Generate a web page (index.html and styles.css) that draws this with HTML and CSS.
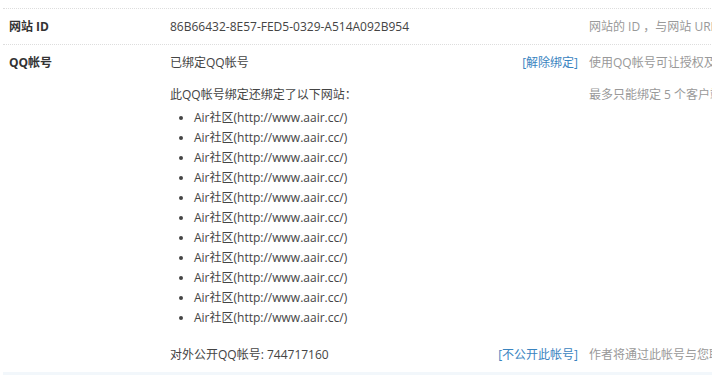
FILE: index.html
```html
<!DOCTYPE html>
<html lang="zh-CN">
<head>
    <meta charset="UTF-8">
    <meta name="viewport" content="width=device-width, initial-scale=1.0">
    <title>站点信息</title>
    <link rel="stylesheet" href="styles.css">
</head>
<body>

<div class="setting">
    <div class="row">
        <div class="row-label">网站 ID</div>
        <div class="row-value">86B66432-8E57-FED5-0329-A514A092B954</div>
        <div class="row-tip">网站的 ID ，与网站 URL 一起作为网站的唯一标识</div>
    </div>

    <div class="row row-qq">
        <div class="row-label qq-label">QQ帐号</div>

        <div class="row-value">
            已绑定QQ帐号
            <a href="#" class="action">[解除绑定]</a>
        </div>
        <div class="row-tip">使用QQ帐号可让授权及管理更加方便</div>

        <div class="row-value sites">
            <p>此QQ帐号绑定还绑定了以下网站：</p>
            <ul class="site-list">
                <li>Air社区(http://www.aair.cc/)</li>
                <li>Air社区(http://www.aair.cc/)</li>
                <li>Air社区(http://www.aair.cc/)</li>
                <li>Air社区(http://www.aair.cc/)</li>
                <li>Air社区(http://www.aair.cc/)</li>
                <li>Air社区(http://www.aair.cc/)</li>
                <li>Air社区(http://www.aair.cc/)</li>
                <li>Air社区(http://www.aair.cc/)</li>
                <li>Air社区(http://www.aair.cc/)</li>
                <li>Air社区(http://www.aair.cc/)</li>
                <li>Air社区(http://www.aair.cc/)</li>
            </ul>
        </div>
        <div class="row-tip sites">最多只能绑定 5 个客户端网站</div>

        <div class="row-value public">
            对外公开QQ帐号: 744717160
            <a href="#" class="action">[不公开此帐号]</a>
        </div>
        <div class="row-tip public">作者将通过此帐号与您联系</div>
    </div>

    <div class="row-end"></div>
</div>

</body>
</html>
```

FILE: styles.css
```css
body {
    margin: 0;
    font-family: "Open Sans", "Noto Sans CJK SC", sans-serif;
    font-size: 12px;
    line-height: 20px;
    color: #444;
    overflow: hidden;
}
.setting {
    width: 1000px;
    margin: 8px 0 0 3px;
}
.row {
    display: grid;
    grid-template-columns: 167px 410px 1fr;
    border-top: 1px dotted #ddd;
    padding: 8px 0 7px;
}
.row-label {
    padding-left: 6px;
    font-weight: bold;
    color: #333;
}
.qq-label {
    grid-row: 1 / span 3;
}
.row-value {
    padding-right: 2px;
}
.row-tip {
    padding-left: 9px;
    color: #999;
    white-space: nowrap;
}
.action {
    float: right;
    color: #3a84bf;
    text-decoration: none;
}
.sites {
    margin-top: 12px;
}
.sites p {
    margin: 0;
}
.site-list {
    margin: 3px 0 0;
    padding-left: 24px;
}
.public {
    margin-top: 17px;
}
.row-end {
    height: 3px;
    background-color: #f2f7fb;
}
```
